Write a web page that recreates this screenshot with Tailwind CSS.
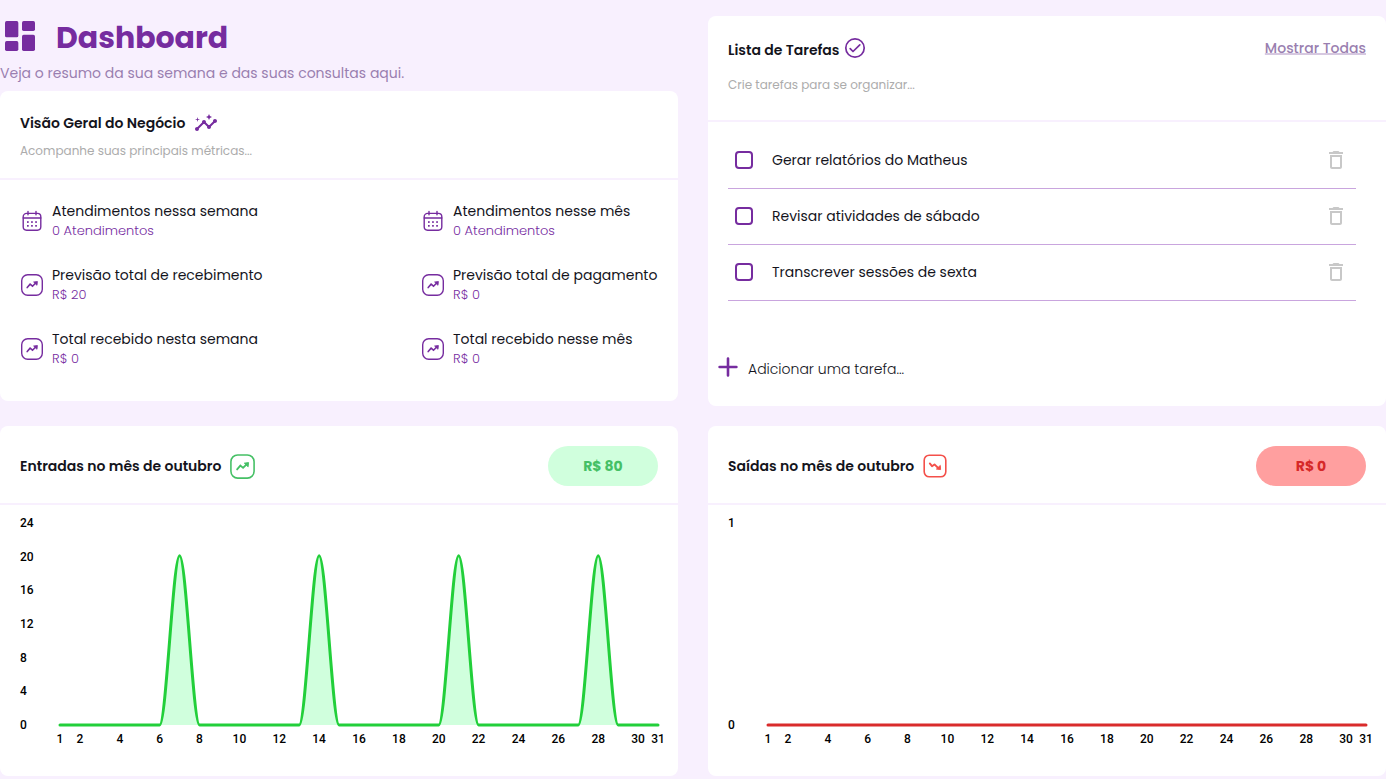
<!DOCTYPE html>
<html lang="pt-BR">
<head>
<meta charset="utf-8">
<meta name="viewport" content="width=device-width, initial-scale=1">
<title>Dashboard</title>
<script src="https://cdn.jsdelivr.net/npm/@tailwindcss/browser@4"></script>
</head>
<body class="min-h-screen bg-[#f8f0fe] font-['Poppins','Inter',sans-serif] text-[#14141c]">
<svg class="hidden" aria-hidden="true">
  <symbol id="calendar" viewBox="0 0 24 24"><g fill="none" stroke="currentColor" stroke-width="1.4" stroke-linecap="round"><rect x="3.2" y="4.4" width="17.6" height="16.8" rx="3.4"/><path d="M3.2 9h17.6M8 2.4v3.4M16 2.4v3.4"/></g><g fill="currentColor"><rect x="7" y="12.2" width="1.7" height="1.7"/><rect x="11.1" y="12.2" width="1.7" height="1.7"/><rect x="15.2" y="12.2" width="1.7" height="1.7"/><rect x="7" y="16" width="1.7" height="1.7"/><rect x="11.1" y="16" width="1.7" height="1.7"/><rect x="15.2" y="16" width="1.7" height="1.7"/></g></symbol>
  <symbol id="trend-up" viewBox="0 0 24 24"><rect x="1.7" y="1.7" width="20.6" height="20.6" rx="6" fill="none" stroke="currentColor" stroke-width="1.4"/><path d="M7.2 14.6l2.9-3.4 2.4 2 3.2-3.2" fill="none" stroke="currentColor" stroke-width="1.6" stroke-linejoin="miter" stroke-linecap="round"/><path d="M13.6 9l3.8-.5-.4 3.8z" fill="currentColor" stroke="currentColor" stroke-width=".8" stroke-linejoin="round"/></symbol>
  <symbol id="trend-down" viewBox="0 0 24 24"><rect x="1.2" y="1.2" width="21.6" height="21.6" rx="5" fill="none" stroke="currentColor" stroke-width="1.6"/><path d="M6.8 9.4l2.2 2.8 2.5-1.8 3.9 3.8" fill="none" stroke="currentColor" stroke-width="1.9" stroke-linejoin="round" stroke-linecap="round"/><path d="M13.4 15.1l4.2.5-.3-4.2z" fill="currentColor" stroke="currentColor" stroke-width=".9" stroke-linejoin="round"/></symbol>
  <symbol id="trash" viewBox="0 0 24 24"><path fill="currentColor" d="M6 19c0 1.1.9 2 2 2h8c1.1 0 2-.9 2-2V7H6v12zM8 9h8v10H8V9zm7.5-5l-1-1h-5l-1 1H5v2h14V4z"/></symbol>
</svg>

<main class="grid grid-cols-2 gap-x-[30px] gap-y-5 pt-4">
  <div class="pb-[5px]">
    <header>
      <div class="flex h-10 items-center gap-4 text-[#762c9f]">
        <svg class="size-10" viewBox="0 0 24 24" fill="currentColor" aria-hidden="true"><rect x="3" y="3" width="8" height="9.8" rx="1"/><rect x="3" y="15" width="8" height="6" rx="1"/><rect x="13.2" y="3" width="7.8" height="6" rx="1"/><rect x="13.2" y="11.2" width="7.8" height="9.8" rx="1"/></svg>
        <h1 class="pt-1 text-[30px] leading-9 font-bold">Dashboard</h1>
      </div>
      <p class="h-[35px] pt-[5px] text-sm leading-6 text-[#9a7fb0]">Veja o resumo da sua semana e das suas consultas aqui.</p>
    </header>
    <section class="rounded-lg bg-white pb-8">
      <div class="border-b-2 border-[#f8f0fe] px-5 pt-5 pb-4">
        <h2 class="flex h-6 items-center gap-[9px] text-sm font-semibold">Visão Geral do Negócio
          <svg class="size-6 text-[#762c9f]" viewBox="0 0 24 24" fill="currentColor" aria-hidden="true"><path d="M21 8c-1.45 0-2.26 1.44-1.93 2.51l-3.55 3.56c-.3-.09-.74-.09-1.04 0l-2.55-2.55C12.27 10.45 11.46 9 10 9c-1.45 0-2.27 1.44-1.93 2.52l-4.56 4.55C2.44 15.74 1 16.55 1 18c0 1.1.9 2 2 2 1.45 0 2.26-1.44 1.93-2.51l4.55-4.56c.3.09.74.09 1.04 0l2.55 2.55C12.73 16.55 13.54 18 15 18c1.45 0 2.27-1.44 1.93-2.52l3.56-3.55C21.56 12.26 23 11.45 23 10c0-1.1-.9-2-2-2z"/><path d="M15 9l.94-2.07L18 6l-2.06-.93L15 3l-.92 2.07L12 6l2.08.93zM3.5 11L4 9l2-.5L4 8l-.5-2L3 8l-2 .5L3 9z"/></svg>
        </h2>
        <p class="mt-[5px] text-xs leading-[22px] text-[#acacac]">Acompanhe suas principais métricas...</p>
      </div>
      <dl class="grid grid-cols-[1fr_237px] gap-y-6 px-5 pt-[21px]">
        <div class="grid grid-cols-[24px_1fr] gap-x-2"><svg class="row-span-2 size-6 self-center text-[#762c9f]" aria-hidden="true"><use href="#calendar"/></svg><dt class="text-sm leading-5 whitespace-nowrap">Atendimentos nessa semana</dt><dd class="text-[13px] leading-5 font-light text-[#762c9f]">0 Atendimentos</dd></div>
        <div class="grid grid-cols-[24px_1fr] gap-x-2"><svg class="row-span-2 size-6 self-center text-[#762c9f]" aria-hidden="true"><use href="#calendar"/></svg><dt class="text-sm leading-5 whitespace-nowrap">Atendimentos nesse mês</dt><dd class="text-[13px] leading-5 font-light text-[#762c9f]">0 Atendimentos</dd></div>
        <div class="grid grid-cols-[24px_1fr] gap-x-2"><svg class="row-span-2 size-6 self-center text-[#762c9f]" aria-hidden="true"><use href="#trend-up"/></svg><dt class="text-sm leading-5 whitespace-nowrap">Previsão total de recebimento</dt><dd class="text-[13px] leading-5 font-light text-[#762c9f]">R$ 20</dd></div>
        <div class="grid grid-cols-[24px_1fr] gap-x-2"><svg class="row-span-2 size-6 self-center text-[#762c9f]" aria-hidden="true"><use href="#trend-up"/></svg><dt class="text-sm leading-5 whitespace-nowrap">Previsão total de pagamento</dt><dd class="text-[13px] leading-5 font-light text-[#762c9f]">R$ 0</dd></div>
        <div class="grid grid-cols-[24px_1fr] gap-x-2"><svg class="row-span-2 size-6 self-center text-[#762c9f]" aria-hidden="true"><use href="#trend-up"/></svg><dt class="text-sm leading-5 whitespace-nowrap">Total recebido nesta semana</dt><dd class="text-[13px] leading-5 font-light text-[#762c9f]">R$ 0</dd></div>
        <div class="grid grid-cols-[24px_1fr] gap-x-2"><svg class="row-span-2 size-6 self-center text-[#762c9f]" aria-hidden="true"><use href="#trend-up"/></svg><dt class="text-sm leading-5 whitespace-nowrap">Total recebido nesse mês</dt><dd class="text-[13px] leading-5 font-light text-[#762c9f]">R$ 0</dd></div>
      </dl>
    </section>
  </div>

  <section class="flex flex-col rounded-lg bg-white">
    <div class="border-b-2 border-[#f8f0fe] px-5 pt-5 pb-6">
      <div class="flex items-start justify-between">
        <h2 class="flex items-start gap-[5px] text-sm leading-7 font-semibold">Lista de Tarefas
          <svg class="h-6 w-[22px] text-[#762c9f]" viewBox="0 0 22 22" fill="none" stroke="currentColor" stroke-width="1.7" stroke-linecap="round" stroke-linejoin="round" aria-hidden="true"><circle cx="11" cy="11" r="9.2"/><path d="M6.2 11.6l2.8 2.9 6.8-6.6"/></svg>
        </h2>
        <a href="#" class="text-sm leading-6 font-medium text-[#9a7fb0] underline decoration-[#d6c8e0] decoration-2 underline-offset-0">Mostrar Todas</a>
      </div>
      <p class="mt-2.5 text-xs leading-[22px] text-[#acacac]">Crie tarefas para se organizar...</p>
    </div>
    <ul class="pt-[11px] pr-[30px] pl-5">
      <li class="flex h-14 items-center border-b border-[#c9a5de] pr-2 pb-px pl-[7px]"><input id="t1" type="checkbox" class="size-[18px] appearance-none rounded-[4px] border-2 border-[#762c9f] checked:bg-[#762c9f]"><label for="t1" class="ml-[19px] flex-1 text-sm">Gerar relatórios do Matheus</label><button type="button" aria-label="Excluir tarefa" class="text-[#c8c8c8]"><svg class="size-6"><use href="#trash"/></svg></button></li>
      <li class="flex h-14 items-center border-b border-[#c9a5de] pr-2 pb-px pl-[7px]"><input id="t2" type="checkbox" class="size-[18px] appearance-none rounded-[4px] border-2 border-[#762c9f] checked:bg-[#762c9f]"><label for="t2" class="ml-[19px] flex-1 text-sm">Revisar atividades de sábado</label><button type="button" aria-label="Excluir tarefa" class="text-[#c8c8c8]"><svg class="size-6"><use href="#trash"/></svg></button></li>
      <li class="flex h-14 items-center border-b border-[#c9a5de] pr-2 pb-px pl-[7px]"><input id="t3" type="checkbox" class="size-[18px] appearance-none rounded-[4px] border-2 border-[#762c9f] checked:bg-[#762c9f]"><label for="t3" class="ml-[19px] flex-1 text-sm">Transcrever sessões de sexta</label><button type="button" aria-label="Excluir tarefa" class="text-[#c8c8c8]"><svg class="size-6"><use href="#trash"/></svg></button></li>
    </ul>
    <form class="mt-auto flex items-start gap-2.5 px-2.5 pb-[25px]">
      <button type="button" aria-label="Adicionar" class="text-[#762c9f]"><svg class="size-5" viewBox="0 0 20 20" fill="none" stroke="currentColor" stroke-width="2.6" stroke-linecap="round"><path d="M10 1.6v16.8M1.6 10h16.8"/></svg></button>
      <input type="text" aria-label="Adicionar uma tarefa" placeholder="Adicionar uma tarefa..." class="h-6 flex-1 text-sm font-light placeholder-[#14141c] outline-none">
    </form>
  </section>

  <section class="rounded-lg bg-white">
    <div class="flex items-center justify-between border-b-2 border-[#f8f0fe] px-5 pt-5 pb-[17px]">
      <h2 class="flex items-center gap-2 text-sm font-semibold">Entradas no mês de outubro
        <svg class="size-[27px] text-[#45c065]" aria-hidden="true"><use href="#trend-up"/></svg>
      </h2>
      <span class="flex h-10 w-[110px] items-center justify-center rounded-full bg-[#d0ffdd] text-sm font-bold text-[#45c065]">R$ 80</span>
    </div>
    <div class="flex h-[271px] px-5 pt-[17px] pb-[51px] font-['Roboto',sans-serif] text-xs font-medium text-black">
      <ul class="-my-2 flex w-10 shrink-0 flex-col justify-between leading-4 [&>li]:pt-px"><li>24</li><li>20</li><li>16</li><li>12</li><li>8</li><li>4</li><li>0</li></ul>
      <svg class="h-full min-w-0 flex-1 overflow-visible" role="img" aria-label="Entradas por dia">
        <svg class="overflow-visible" width="100%" height="100%" viewBox="1 0 30 24" preserveAspectRatio="none">
          <path fill="#d0ffdd" d="M6 24C6.33 24 6.67 4 7 4S7.67 24 8 24zM13 24C13.33 24 13.67 4 14 4S14.67 24 15 24zM20 24C20.33 24 20.67 4 21 4S21.67 24 22 24zM27 24C27.33 24 27.67 4 28 4S28.67 24 29 24z"/>
          <path fill="none" stroke="#22cf3a" stroke-width="3" stroke-linejoin="round" stroke-linecap="round" vector-effect="non-scaling-stroke" d="M1 24H6C6.33 24 6.67 4 7 4S7.67 24 8 24H13C13.33 24 13.67 4 14 4S14.67 24 15 24H20C20.33 24 20.67 4 21 4S21.67 24 22 24H27C27.33 24 27.67 4 28 4S28.67 24 29 24H31"/>
        </svg>
        <svg class="overflow-visible" y="100%" width="100%" height="20" text-anchor="middle">
          <text x="0%" y="18">1</text><text x="3.33%" y="18">2</text><text x="10%" y="18">4</text><text x="16.67%" y="18">6</text><text x="23.33%" y="18">8</text><text x="30%" y="18">10</text><text x="36.67%" y="18">12</text><text x="43.33%" y="18">14</text><text x="50%" y="18">16</text><text x="56.67%" y="18">18</text><text x="63.33%" y="18">20</text><text x="70%" y="18">22</text><text x="76.67%" y="18">24</text><text x="83.33%" y="18">26</text><text x="90%" y="18">28</text><text x="96.67%" y="18">30</text><text x="100%" y="18">31</text>
        </svg>
      </svg>
    </div>
  </section>

  <section class="rounded-lg bg-white">
    <div class="flex items-center justify-between border-b-2 border-[#f8f0fe] px-5 pt-5 pb-[17px]">
      <h2 class="flex items-center gap-[9px] text-sm font-semibold">Saídas no mês de outubro
        <svg class="size-6 text-[#f4504a]" aria-hidden="true"><use href="#trend-down"/></svg>
      </h2>
      <span class="flex h-10 w-[110px] items-center justify-center rounded-full bg-[#ff9f9f] text-sm font-bold text-[#d62828]">R$ 0</span>
    </div>
    <div class="flex h-[271px] px-5 pt-[17px] pb-[51px] font-['Roboto',sans-serif] text-xs font-medium text-black">
      <ul class="-my-2 flex w-10 shrink-0 flex-col justify-between leading-4 [&>li]:pt-px"><li>1</li><li>0</li></ul>
      <svg class="h-full min-w-0 flex-1 overflow-visible" role="img" aria-label="Saídas por dia">
        <svg class="overflow-visible" width="100%" height="100%" viewBox="1 0 30 24" preserveAspectRatio="none">
          <path fill="none" stroke="#d92b2b" stroke-width="3" stroke-linecap="round" vector-effect="non-scaling-stroke" d="M1 24H31"/>
        </svg>
        <svg class="overflow-visible" y="100%" width="100%" height="20" text-anchor="middle">
          <text x="0%" y="18">1</text><text x="3.33%" y="18">2</text><text x="10%" y="18">4</text><text x="16.67%" y="18">6</text><text x="23.33%" y="18">8</text><text x="30%" y="18">10</text><text x="36.67%" y="18">12</text><text x="43.33%" y="18">14</text><text x="50%" y="18">16</text><text x="56.67%" y="18">18</text><text x="63.33%" y="18">20</text><text x="70%" y="18">22</text><text x="76.67%" y="18">24</text><text x="83.33%" y="18">26</text><text x="90%" y="18">28</text><text x="96.67%" y="18">30</text><text x="100%" y="18">31</text>
        </svg>
      </svg>
    </div>
  </section>
</main>
</body>
</html>
